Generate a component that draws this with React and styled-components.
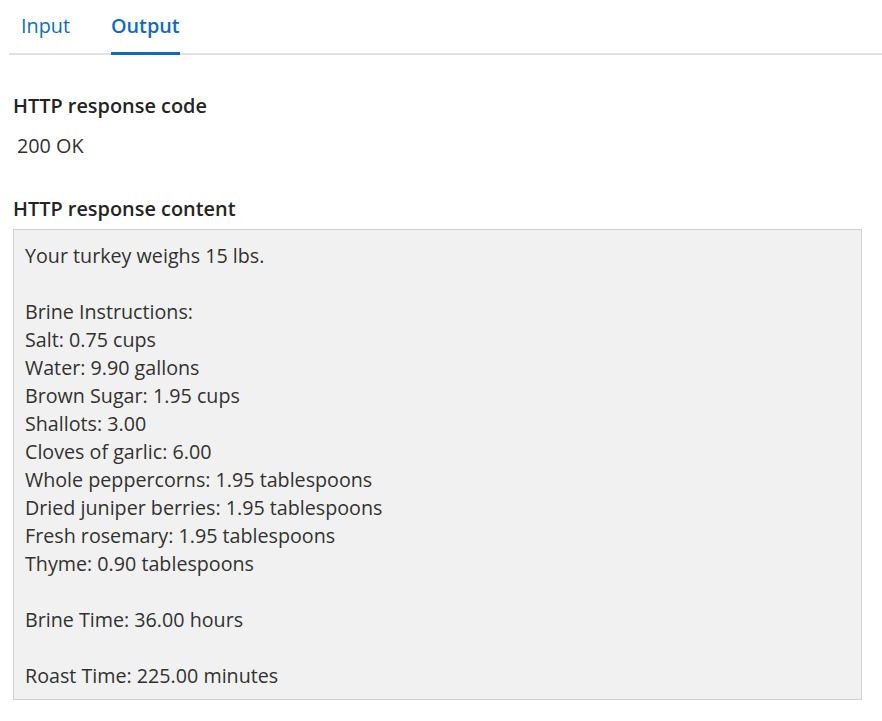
import styled, { createGlobalStyle } from "styled-components";

const GlobalStyle = createGlobalStyle`
  body {
    margin: 0;
    background: #fff;
    font-family: "Open Sans", "Noto Sans", sans-serif;
    color: #323130;
  }
`;

const Page = styled.div`
  padding: 0 0 0 9px;
  width: 873px;
`;

const TabBar = styled.div`
  display: flex;
  gap: 41px;
  padding-left: 12px;
  border-bottom: 2px solid #e1e1e1;
  height: 53px;
  align-items: stretch;
`;

const Tab = styled.div`
  font-size: 19.8px;
  color: #0f6cbd;
  font-weight: ${(p) => (p.$active ? 600 : 400)};
  display: flex;
  align-items: center;
  padding-top: 1px;
  padding-bottom: 2px;
  margin-bottom: -2px;
  border-bottom: 3px solid ${(p) => (p.$active ? "#0f6cbd" : "transparent")};
  box-sizing: border-box;
`;

const Section = styled.div`
  padding: 0 20px 0 4px;
`;

const Label = styled.div`
  font-size: 19.9px;
  font-weight: 560;
  color: #242424;
  line-height: 26px;
  margin-top: ${(p) => p.$top}px;
`;

const Value = styled.div`
  font-size: 19.8px;
  line-height: 26px;
  margin-top: 14px;
  padding-left: 4px;
`;

const ContentBox = styled.div`
  margin-top: 7px;
  background: #f1f1f1;
  border: 1px solid #d1d1d1;
  padding: 12px 11px 9px;
  font-size: 19.7px;
  line-height: 28px;
  white-space: pre-wrap;
  color: #323130;
`;

const content = `Your turkey weighs 15 lbs.

Brine Instructions:
Salt: 0.75 cups
Water: 9.90 gallons
Brown Sugar: 1.95 cups
Shallots: 3.00
Cloves of garlic: 6.00
Whole peppercorns: 1.95 tablespoons
Dried juniper berries: 1.95 tablespoons
Fresh rosemary: 1.95 tablespoons
Thyme: 0.90 tablespoons

Brine Time: 36.00 hours

Roast Time: 225.00 minutes`;

export default function App() {
  return (
    <>
      <GlobalStyle />
      <Page>
        <TabBar>
          <Tab>Input</Tab>
          <Tab $active>Output</Tab>
        </TabBar>
        <Section>
          <Label $top={38}>HTTP response code</Label>
          <Value>200 OK</Value>
          <Label $top={37}>HTTP response content</Label>
          <ContentBox>{content}</ContentBox>
        </Section>
      </Page>
    </>
  );
}
